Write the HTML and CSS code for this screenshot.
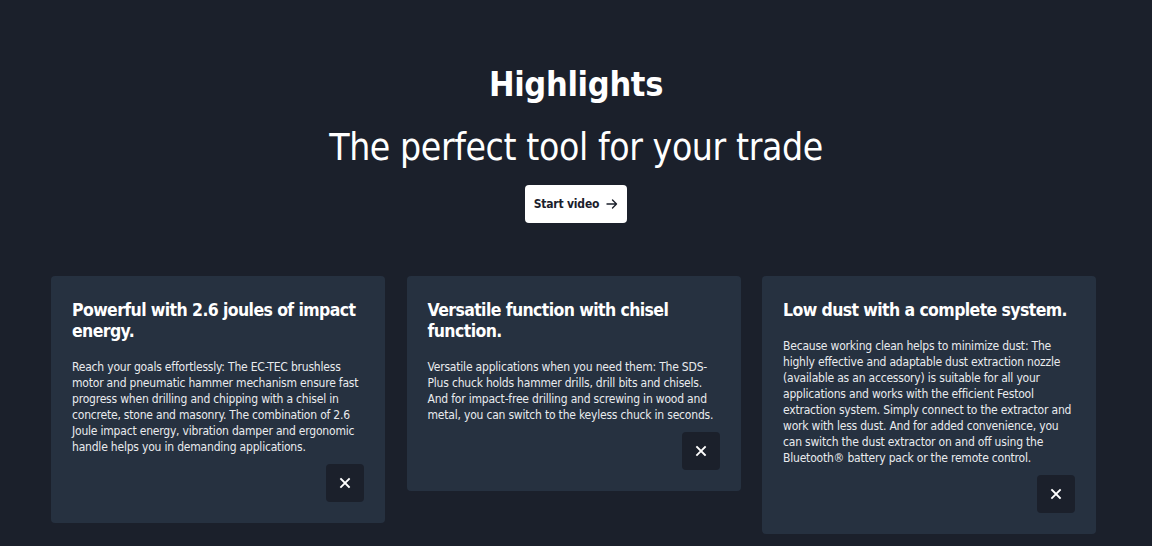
FILE: index.html
```html
<!DOCTYPE html>
<html lang="en">
<head>
<meta charset="utf-8">
<title>Highlights</title>
<link rel="stylesheet" href="styles.css">
</head>
<body>
<section class="highlights">
  <header class="intro">
    <h2 class="intro-title">Highlights</h2>
    <p class="intro-sub">The perfect tool for your trade</p>
    <button class="video-btn" type="button">Start video
      <svg class="arrow" width="12" height="12" viewBox="0 0 12 12" aria-hidden="true"><path d="M1 6h9.5M6.5 2l4 4-4 4" fill="none" stroke="#1b202b" stroke-width="1.4" stroke-linecap="round" stroke-linejoin="round"/></svg>
    </button>
  </header>
  <div class="cards">
    <article class="card">
      <h3 class="card-title">Powerful with 2.6 joules of impact energy.</h3>
      <p class="card-text">Reach your goals effortlessly: The EC-TEC brushless motor and pneumatic hammer mechanism ensure fast progress when drilling and chipping with a chisel in concrete, stone and masonry. The combination of 2.6 Joule impact energy, vibration damper and ergonomic handle helps you in demanding applications.</p>
      <button class="close" type="button" aria-label="Close"><svg width="12" height="12" viewBox="0 0 12 12"><path d="M2 2l8 8M10 2l-8 8" stroke="#fff" stroke-width="1.8" stroke-linecap="square"/></svg></button>
    </article>
    <article class="card">
      <h3 class="card-title">Versatile function with chisel function.</h3>
      <p class="card-text">Versatile applications when you need them: The SDS-Plus chuck holds hammer drills, drill bits and chisels. And for impact-free drilling and screwing in wood and metal, you can switch to the keyless chuck in seconds.</p>
      <button class="close" type="button" aria-label="Close"><svg width="12" height="12" viewBox="0 0 12 12"><path d="M2 2l8 8M10 2l-8 8" stroke="#fff" stroke-width="1.8" stroke-linecap="square"/></svg></button>
    </article>
    <article class="card">
      <h3 class="card-title">Low dust with a complete system.</h3>
      <p class="card-text">Because working clean helps to minimize dust: The highly effective and adaptable dust extraction nozzle (available as an accessory) is suitable for all your applications and works with the efficient Festool extraction system. Simply connect to the extractor and work with less dust. And for added convenience, you can switch the dust extractor on and off using the Bluetooth® battery pack or the remote control.</p>
      <button class="close" type="button" aria-label="Close"><svg width="12" height="12" viewBox="0 0 12 12"><path d="M2 2l8 8M10 2l-8 8" stroke="#fff" stroke-width="1.8" stroke-linecap="square"/></svg></button>
    </article>
  </div>
</section>
</body>
</html>
```

FILE: styles.css
```css
* { box-sizing: border-box; }
html, body { margin: 0; padding: 0; }
body {
  background: #1b202b;
  color: #ffffff;
  font-family: "DejaVu Sans Condensed", "DejaVu Sans", sans-serif;
  height: 546px;
  overflow: hidden;
}
.highlights {
  padding: 64px 51px 0 51px;
}
.intro {
  display: flex;
  flex-direction: column;
  align-items: center;
}
.intro-title {
  margin: 0;
  font-size: 34px;
  line-height: 40px;
  font-weight: 700;
  letter-spacing: -0.3px;
}
.intro-sub {
  margin: 22px 0 0 0;
  font-size: 37px;
  line-height: 44px;
  font-weight: 400;
  letter-spacing: -0.4px;
}
.video-btn {
  margin-top: 15px;
  height: 38px;
  width: 102px;
  border: 0;
  border-radius: 4px;
  background: #ffffff;
  color: #1b202b;
  font-family: inherit;
  font-size: 12px;
  font-weight: 700;
  letter-spacing: -0.2px;
  display: flex;
  align-items: center;
  justify-content: center;
  gap: 7px;
  padding: 0;
}
.cards {
  margin-top: 53px;
  display: flex;
  align-items: flex-start;
  gap: 21.5px;
}
.card {
  width: 334px;
  flex: 0 0 334px;
  background: #263140;
  border-radius: 4px;
  padding: 24px 21px 21px 21px;
  display: flex;
  flex-direction: column;
}
.card-title {
  margin: 0;
  font-size: 17.5px;
  line-height: 21px;
  font-weight: 700;
  letter-spacing: -0.6px;
}
.card-text {
  margin: 17px 0 0 0;
  font-size: 12px;
  line-height: 16px;
  letter-spacing: -0.2px;
  color: #e9ebee;
}
.close {
  align-self: flex-end;
  margin-top: 9px;
  width: 38px;
  height: 38px;
  border: 0;
  border-radius: 4px;
  background: #1b202b;
  display: flex;
  align-items: center;
  justify-content: center;
  padding: 0;
}
```
